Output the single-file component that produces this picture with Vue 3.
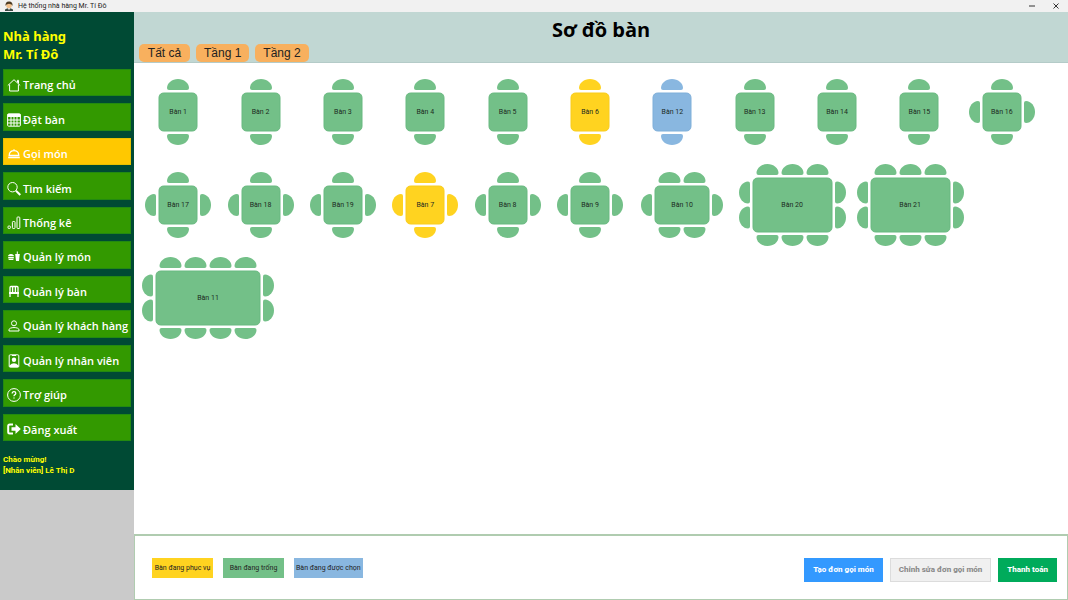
<script setup>
import { ref } from 'vue'

const menu = [
  { id: 'home', label: 'Trang chủ' },
  { id: 'grid', label: 'Đặt bàn' },
  { id: 'dish', label: 'Gọi món' },
  { id: 'search', label: 'Tìm kiếm' },
  { id: 'chart', label: 'Thống kê' },
  { id: 'food', label: 'Quản lý món' },
  { id: 'chair', label: 'Quản lý bàn' },
  { id: 'user', label: 'Quản lý khách hàng' },
  { id: 'badge', label: 'Quản lý nhân viên' },
  { id: 'help', label: 'Trợ giúp' },
  { id: 'exit', label: 'Đăng xuất' },
]
const active = ref('dish')
const floors = ['Tất cả', 'Tầng 1', 'Tầng 2']

const CHAIR = 'M2 11Q0 11 0 9C0 4 5 0 11 0S22 4 22 9Q22 11 20 11Z'

// Seats per long side, seats per short side, and body size for each table kind
const kinds = {
  two: { across: 1, down: 0, w: 39, h: 39 },
  four: { across: 1, down: 1, w: 39, h: 39 },
  six: { across: 2, down: 1, w: 55, h: 39 },
  ten: { across: 3, down: 2, w: 80, h: 55 },
  twelve: { across: 4, down: 2, w: 105, h: 55 },
}

function makeTable(number, kind, state = 'free') {
  const { across, down, w, h } = kinds[kind]
  const width = w + 27
  const height = h + 27
  const chairs = []
  const startX = (width - (across * 25 - 3)) / 2
  const startY = (height - (down * 25 - 3)) / 2
  for (let i = 0; i < across; i++) {
    const x = startX + i * 25
    chairs.push(`translate(${x} 0)`, `translate(${x + 22} ${height}) rotate(180)`)
  }
  for (let i = 0; i < down; i++) {
    const y = startY + i * 25
    chairs.push(`translate(0 ${y + 22}) rotate(-90)`, `translate(${width} ${y}) rotate(90)`)
  }
  return { number, kind, state, w, h, width, height, chairs }
}

const firstRow = [1, 2, 3, 4, 5].map((n) => makeTable(n, 'two'))
firstRow.push(makeTable(6, 'two', 'serving'), makeTable(12, 'two', 'selected'))
firstRow.push(...[13, 14, 15].map((n) => makeTable(n, 'two')), makeTable(16, 'four'))

const tables = [
  ...firstRow,
  ...[17, 18, 19].map((n) => makeTable(n, 'four')),
  makeTable(7, 'four', 'serving'),
  makeTable(8, 'four'),
  makeTable(9, 'four'),
]
const groups = [
  [makeTable(10, 'six'), makeTable(20, 'ten'), makeTable(21, 'ten')],
  [makeTable(11, 'twelve')],
]
const cells = [
  ...tables.map((t) => ({ span: 'single', items: [t] })),
  { span: 'rest', items: groups[0] },
  { span: 'full', items: groups[1] },
]
</script>

<template>
  <div class="window">
    <header class="titlebar">
      <svg class="app-icon" viewBox="0 0 10 10" aria-hidden="true">
        <path d="M1 10V8.500Q5 6 9 8.500V10Z" fill="#3c4a44" />
        <path d="M4 7h2l-1 2.500Z" fill="#fff" />
        <circle cx="5" cy="4.500" r="2.800" fill="#f2c18d" />
        <path d="M1.500 5Q1 .5 5 .4T8.500 5L7.500 3.500 5 2.800 2.500 3.500Z" fill="#4c3a22" />
      </svg>
      <span class="app-name">Hệ thống nhà hàng Mr. Tí Đô</span>
      <button class="win-btn" aria-label="Thu nhỏ">
        <svg viewBox="0 0 8 8"><path d="M1 4H7" /></svg>
      </button>
      <button class="win-btn" aria-label="Đóng">
        <svg viewBox="0 0 8 8"><path d="M1.500 1.500L6.500 6.500M6.500 1.500L1.500 6.500" /></svg>
      </button>
    </header>

    <div class="body">
      <aside class="sidebar">
        <h2 class="brand">Nhà hàng<br />Mr. Tí Đô</h2>
        <nav class="menu">
          <button
            v-for="m in menu"
            :key="m.id"
            class="menu-item"
            :class="{ active: active === m.id }"
            @click="active = m.id"
          >
            <svg class="menu-icon" viewBox="0 0 14 14" aria-hidden="true">
              <template v-if="m.id === 'home'">
                <path d="M.8 7.500L7 1.700 13.200 7.500M2.600 6.500V13H11.400V6.500M10.500 4.500V2.300H11.500V5.500" />
              </template>
              <template v-else-if="m.id === 'grid'">
                <rect x=".6" y=".8" width="12.800" height="12.400" rx="1" />
                <path d="M.6 1H13.400V4H.6Z" class="solid" />
                <path d="M.6 7H13.400M.6 10H13.400M4 3V13M7 3V13M10 3V13" />
              </template>
              <template v-else-if="m.id === 'dish'">
                <path d="M2.200 8.500C2.200 2 11.800 2 11.800 8.500ZM1.200 10.500H12.800M7 3.500V2.300" class="mid" />
              </template>
              <template v-else-if="m.id === 'search'">
                <circle cx="5.500" cy="5.200" r="4.700" />
                <path d="M9 8.700L13.300 13" class="thick" />
              </template>
              <template v-else-if="m.id === 'chart'">
                <rect x="1" y="10" width="2.400" height="2.500" rx=".8" />
                <rect x="5.400" y="5.500" width="2.600" height="7" rx=".8" />
                <rect x="10" y="1" width="2.800" height="11.500" rx=".8" />
              </template>
              <template v-else-if="m.id === 'food'">
                <path d="M1.200 5.200Q4 3 6.800 5.200V6H1.200ZM1.200 6.700H6.800V7.900H1.200ZM1.200 8.600H6.800L6.200 10H1.800Z" class="solid" />
                <path d="M8.200 4H12.800L12 11H9Z" class="solid" />
                <path d="M10.300 4V1.500" />
              </template>
              <template v-else-if="m.id === 'chair'">
                <path d="M3 8V2.500Q3 1.500 4 1.500H10Q11 1.500 11 2.500V8M5.600 2V7M8.400 2V7" class="mid" />
                <path d="M2 7H12V9H2Z" class="solid" />
                <path d="M3 9V12M11 9V12" class="mid" />
              </template>
              <template v-else-if="m.id === 'user'">
                <circle cx="7" cy="4.300" r="2.500" />
                <path d="M2 12V10.800C2 7.800 12 7.800 12 10.800V12Z" />
              </template>
              <template v-else-if="m.id === 'badge'">
                <rect x="2.200" y=".8" width="9.600" height="12.400" rx="1" />
                <circle cx="7" cy="5.800" r="2.200" class="solid" />
                <path d="M2.500 11.500Q7 7 11.500 11.500V13H2.500ZM5 1H9V2H5Z" class="solid" />
              </template>
              <template v-else-if="m.id === 'help'">
                <circle cx="7" cy="7" r="6.400" />
                <path d="M5.200 5.500Q5.200 3.700 7 3.700T8.800 5.300Q8.800 6.300 7.700 6.900 7 7.300 7 8.300M7 9.500V10.600" class="mid" />
              </template>
              <template v-else>
                <path d="M6 1.500H2.800Q1.200 1.500 1.200 3V9Q1.200 10.500 2.800 10.500H6" class="thick" />
                <path d="M4.500 4.300H8.500V1L13.800 6 8.500 11V7.700H4.500Z" class="solid" />
              </template>
            </svg>
            <span>{{ m.label }}</span>
          </button>
        </nav>
        <p class="welcome">Chào mừng!<br />[Nhân viên] Lê Thị D</p>
      </aside>

      <main class="content">
        <section class="heading">
          <h1>Sơ đồ bàn</h1>
          <div class="tabs">
            <button v-for="f in floors" :key="f" class="tab">{{ f }}</button>
          </div>
        </section>

        <section class="floor">
          <div v-for="(c, i) in cells" :key="i" class="cell" :class="c.span">
            <div v-for="t in c.items" :key="t.number" class="slot" :class="t.kind">
              <button class="table" :class="t.state">
                <svg :width="t.width" :height="t.height" aria-hidden="true">
                  <rect x="14" y="14" :width="t.w - 1" :height="t.h - 1" rx="4.500" />
                  <path v-for="p in t.chairs" :key="p" :d="CHAIR" :transform="p" />
                </svg>
                <span>Bàn {{ t.number }}</span>
              </button>
            </div>
          </div>
        </section>

        <footer class="footer">
          <div class="legend">
            <span class="key serving">Bàn đang phục vụ</span>
            <span class="key free">Bàn đang trống</span>
            <span class="key selected">Bàn đang được chọn</span>
          </div>
          <div class="actions">
            <button class="action create">Tạo đơn gọi món</button>
            <button class="action edit" disabled>Chỉnh sửa đơn gọi món</button>
            <button class="action pay">Thanh toán</button>
          </div>
        </footer>
      </main>
    </div>
  </div>
</template>

<style>
body {
  margin: 0;
  background: #cacaca;
}
</style>

<style scoped>
.window {
  display: flex;
  flex-direction: column;
  min-height: 100vh;
  font-family: "Noto Sans", "Open Sans", sans-serif;
}
button {
  margin: 0;
  padding: 0;
  border: 0;
  background: none;
  font: inherit;
  color: inherit;
  cursor: pointer;
}
h1,
h2,
p {
  margin: 0;
}
.titlebar {
  display: flex;
  align-items: center;
  height: 12px;
  padding: 0 8px 0 4px;
  background: #f1f1f1;
  color: #222;
  font-family: Roboto, "Noto Sans", sans-serif;
  font-size: 7px;
  line-height: 12px;
}
.app-icon {
  width: 10px;
  height: 10px;
  margin-right: 4px;
}
.app-name {
  flex: 1;
}
.win-btn {
  display: flex;
  width: 8px;
  margin-left: 16px;
}
.win-btn svg {
  width: 8px;
  height: 8px;
  fill: none;
  stroke: #333;
}
.body {
  flex: 1;
  display: flex;
}
.sidebar {
  flex: none;
  align-self: flex-start;
  box-sizing: border-box;
  width: 134px;
  padding: 15px 3px 14px;
  background: #004a34;
}
.brand {
  color: #ffff00;
  font-size: 13px;
  line-height: 18px;
  font-weight: 700;
}
.menu {
  display: grid;
  grid-template-columns: minmax(0, 1fr);
  grid-auto-rows: 1fr;
  gap: 7px;
  height: 372px;
  margin-top: 6px;
}
.menu-item {
  display: flex;
  align-items: center;
  gap: 2px;
  padding: 5px 0 0 3px;
  border: 1px solid #238a10;
  background: #339900;
  color: #fff;
  font-family: "Open Sans", "Noto Sans", sans-serif;
  font-size: 11px;
  font-weight: 630;
  line-height: 16px;
  white-space: nowrap;
}
.menu-item.active {
  border-color: #e8c000;
  background: #ffc800;
}
.menu-icon {
  flex: none;
  width: 14px;
  height: 14px;
  fill: none;
  stroke: #fff;
  stroke-width: 1;
}
.menu-icon .solid {
  fill: #fff;
  stroke: none;
}
.menu-icon .thick {
  stroke-width: 2;
}
.menu-icon .mid {
  stroke-width: 1.3;
}
.welcome {
  margin-top: 13px;
  color: #ffff00;
  font-family: Roboto, "Noto Sans", sans-serif;
  font-size: 8px;
  line-height: 11px;
  font-weight: 700;
}
.content {
  flex: 1;
  min-width: 0;
  display: flex;
  flex-direction: column;
  background: #fff;
}
.heading {
  display: flex;
  flex-direction: column;
  background: #c1d7d3;
  border-bottom: 1px solid #b4cbc8;
}
.heading h1 {
  padding-top: 4px;
  color: #000;
  font-family: "Open Sans", "Noto Sans", sans-serif;
  font-size: 20px;
  font-weight: 700;
  line-height: 28px;
  text-align: center;
}
.tabs {
  display: flex;
  gap: 6px;
  padding-left: 5px;
}
.tab {
  min-width: 51px;
  padding: 0 8px;
  border-radius: 5px;
  background: #f8b05e;
  color: #222;
  font-family: "Liberation Sans", Arial, sans-serif;
  font-size: 12px;
  line-height: 18px;
}
.floor {
  flex: 1;
  display: grid;
  grid-template-columns: repeat(11, 1fr);
  grid-auto-rows: 93px;
  padding: 2px 25px 0 3px;
}
.cell {
  display: flex;
  align-items: center;
}
.cell.rest {
  grid-column: 7 / -1;
}
.cell.full {
  grid-column: 1 / -1;
}
.slot {
  display: flex;
  justify-content: center;
}
.slot.two,
.slot.four {
  flex: 1;
}
.slot.six {
  width: 102px;
}
.slot.ten {
  width: 118px;
}
.slot.twelve {
  width: 142px;
}
.table {
  display: grid;
  place-items: center;
  color: #1c2b22;
  font-family: Roboto, "Noto Sans", sans-serif;
  font-size: 7px;
  line-height: 10px;
}
.table svg,
.table span {
  grid-area: 1 / 1;
}
.table svg {
  display: block;
  fill: #73c088;
  stroke: #69b980;
}
.table path {
  stroke: none;
}
.table.serving svg {
  fill: #ffd320;
  stroke: #f8cc1c;
}
.table.selected svg {
  fill: #89b7e0;
  stroke: #7fafd9;
}
.footer {
  display: flex;
  justify-content: space-between;
  align-items: center;
  box-sizing: border-box;
  height: 66px;
  padding: 0 10px 0 17px;
  border: 1px solid #b0ccb0;
  border-top-width: 2px;
}
.legend {
  display: flex;
  gap: 10px;
}
.key {
  min-width: 61px;
  padding: 0 2px;
  box-sizing: border-box;
  color: #222;
  font-family: Roboto, "Noto Sans", sans-serif;
  font-size: 7px;
  line-height: 20px;
  text-align: center;
}
.key.serving {
  background: #ffd320;
}
.key.free {
  background: #73c088;
}
.key.selected {
  background: #89b7e0;
}
.actions {
  display: flex;
  gap: 7px;
  padding-top: 4px;
}
.action {
  padding: 0 8px;
  border: 1px solid transparent;
  color: #fff;
  font-family: Roboto, "Noto Sans", sans-serif;
  font-size: 8px;
  font-weight: 800;
  line-height: 22px;
}
.create {
  background: #3399ff;
}
.edit {
  border-color: #dcdcdc;
  background: #f0f0f0;
  color: #8a8a8a;
}
.pay {
  background: #00ab5b;
}
</style>
